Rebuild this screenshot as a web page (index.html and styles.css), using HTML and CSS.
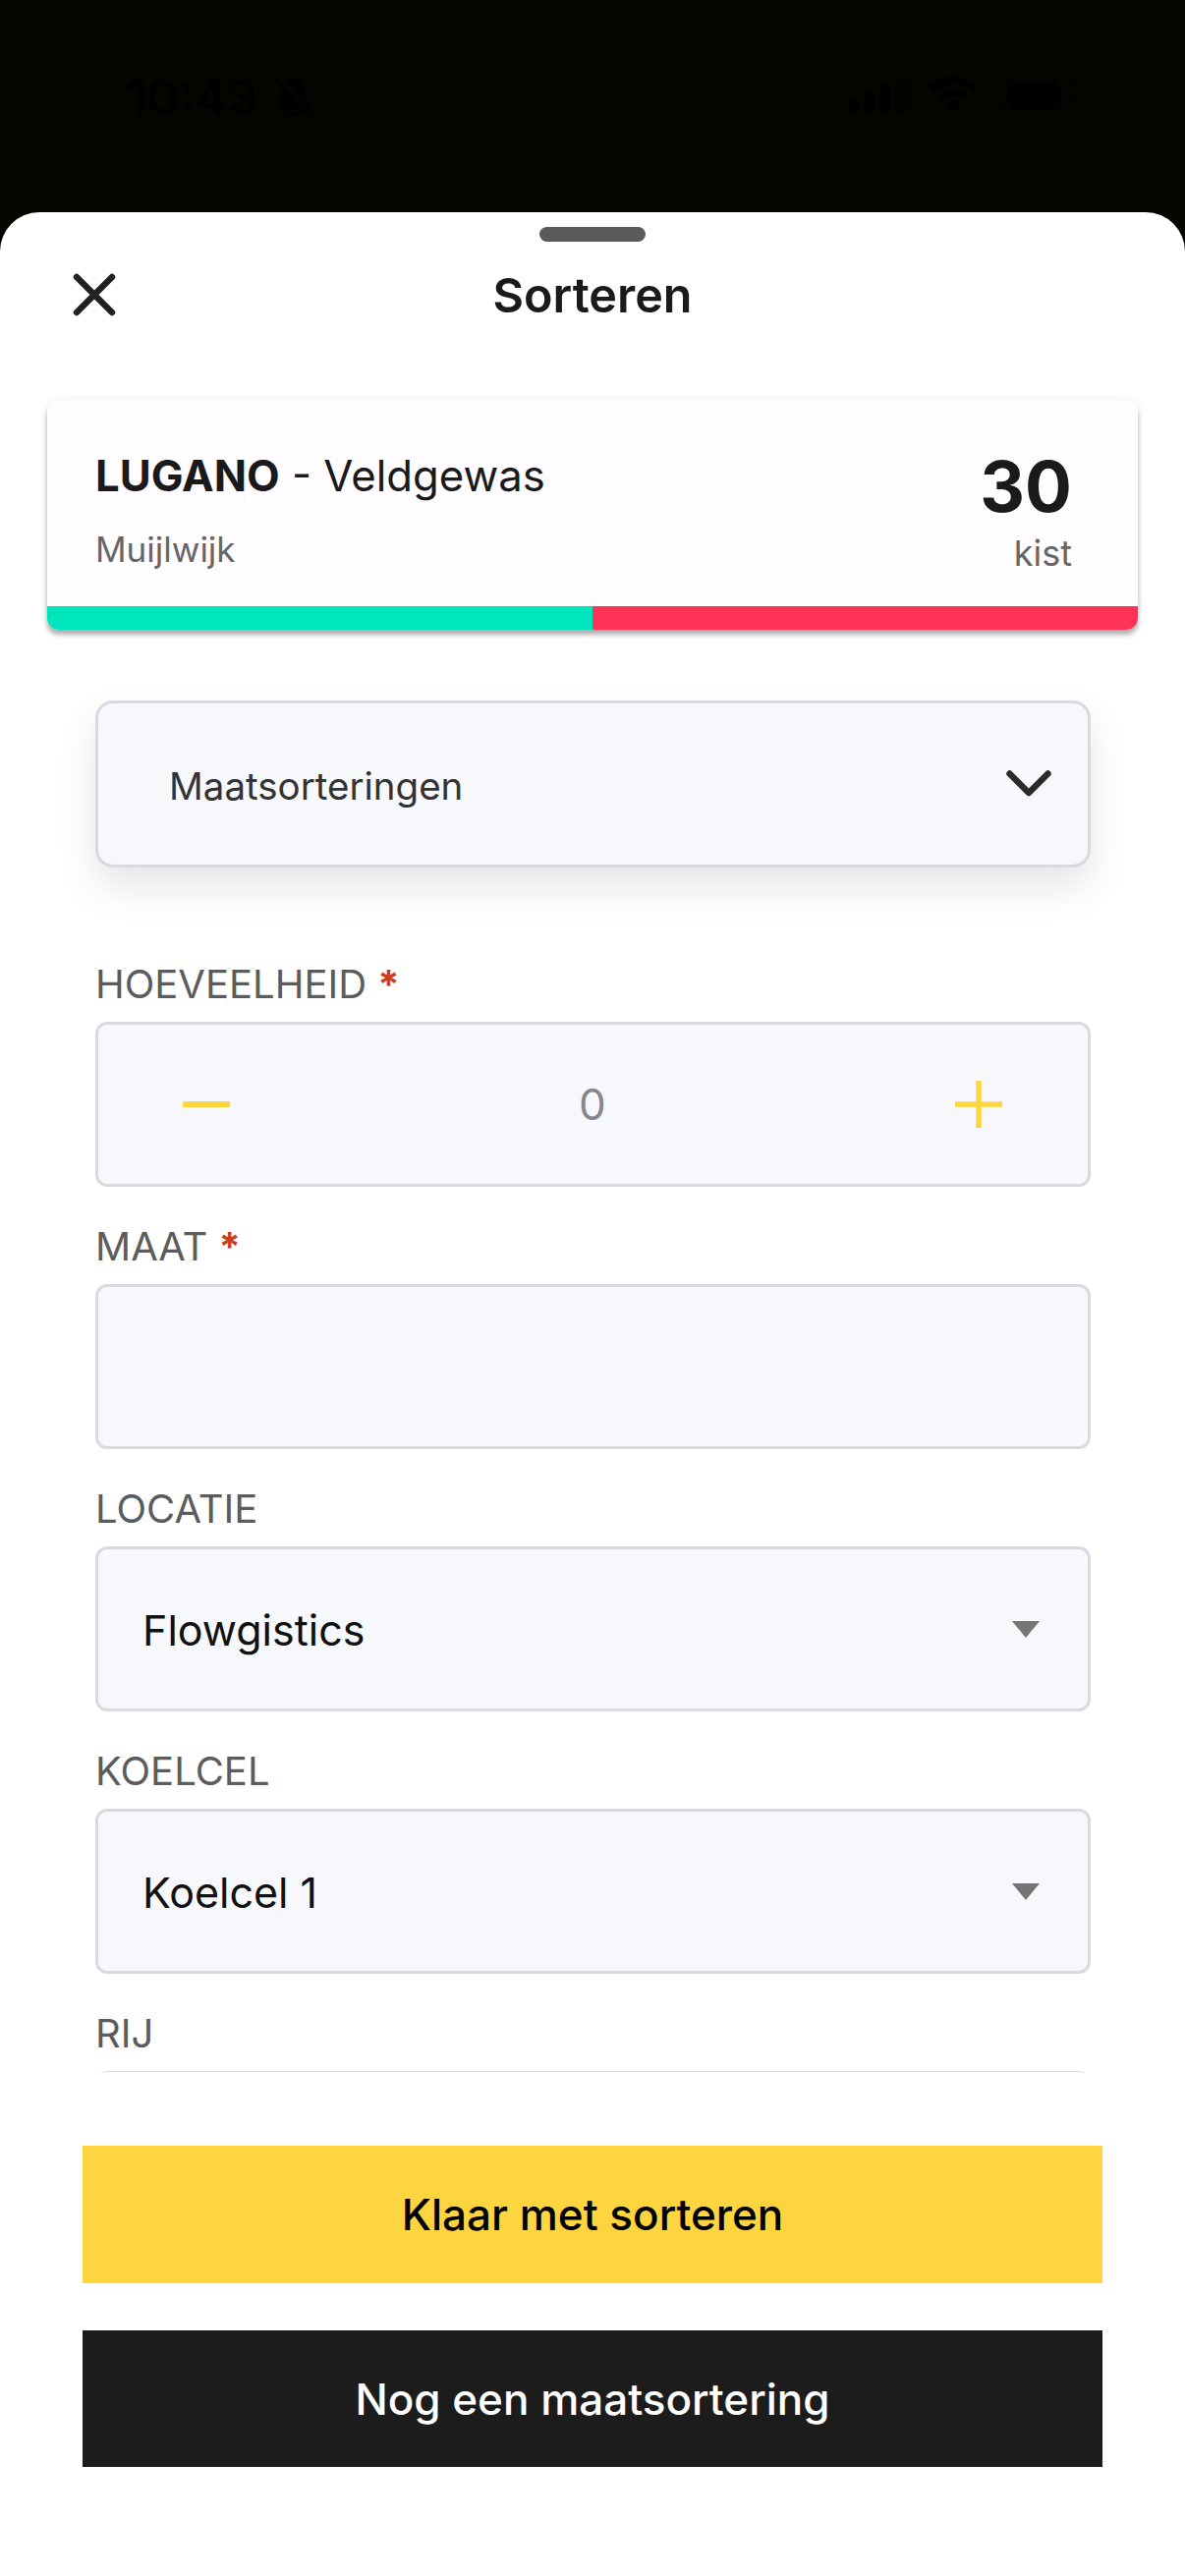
FILE: index.html
```html
<!DOCTYPE html>
<html lang="nl">
<head>
<meta charset="utf-8">
<title>Sorteren</title>
<link rel="stylesheet" href="styles.css">
</head>
<body>
<div class="status">
  <div class="status-left">
    <span class="time">10:43</span>
    <svg class="bell" width="42" height="42" viewBox="0 0 42 42"><path d="M21 1c2 0 3 1 3 3 6 1 9 6 9 12 0 7 2 11 5 14v3H4v-3c3-3 5-7 5-14 0-6 3-11 9-12 0-2 1-3 3-3zM15 35h12c0 4-3 6-6 6s-6-2-6-6z" fill="#000"/><path d="M5 1l34 38" stroke="#050500" stroke-width="6"/><path d="M3 3l34 38" stroke="#000" stroke-width="3"/></svg>
  </div>
  <div class="status-right">
    <svg width="58" height="38" viewBox="0 0 58 38"><g fill="#000"><rect x="0" y="23" width="10" height="14" rx="2"/><rect x="16" y="16" width="10" height="21" rx="2"/><rect x="32" y="8" width="10" height="29" rx="2"/><rect x="48" y="0" width="10" height="37" rx="2" opacity=".5"/></g></svg>
    <svg width="50" height="38" viewBox="0 0 50 38"><path d="M25 0c10 0 18 4 25 10l-5 6c-5-5-12-8-20-8S10 11 5 16L0 10C7 4 15 0 25 0z" fill="#000"/><path d="M25 13c6 0 11 2 15 6l-5 5c-3-2-6-4-10-4s-7 2-10 4l-5-5c4-4 9-6 15-6z" fill="#000"/><path d="M25 25c3 0 5 1 7 3l-7 9-7-9c2-2 4-3 7-3z" fill="#000"/></svg>
    <svg width="80" height="38" viewBox="0 0 80 38"><rect x="1.500" y="1.500" width="70" height="35" rx="11" fill="none" stroke="#000" stroke-width="2" opacity=".6"/><rect x="5" y="5" width="55" height="28" rx="8" fill="#000"/><path d="M75 13c3 1 4 3 4 6s-1 5-4 6z" fill="#000" opacity=".6"/></svg>
  </div>
</div>
<main class="sheet">
  <div class="handle"></div>
  <header class="header">
    <svg class="close" width="44" height="44" viewBox="0 0 44 44"><path d="M4 4l36 36M40 4L4 40" stroke="#222" stroke-width="6.500" stroke-linecap="round" fill="none"/></svg>
    <h1 class="title">Sorteren</h1>
  </header>
  <section class="card">
    <div class="card-body">
      <div class="card-info">
        <div class="card-name"><b>LUGANO</b> - Veldgewas</div>
        <div class="card-place">Muijlwijk</div>
      </div>
      <div class="card-qty">
        <div class="qty-num">30</div>
        <div class="qty-unit">kist</div>
      </div>
    </div>
    <div class="card-bar"><span class="bar-green"></span><span class="bar-red"></span></div>
  </section>
  <div class="select-main">
    <span>Maatsorteringen</span>
    <svg width="48" height="28" viewBox="0 0 48 28"><path d="M4.500 4.500L24 24 43.500 4.500" fill="none" stroke="#2b2b2e" stroke-width="6.500" stroke-linecap="round" stroke-linejoin="round"/></svg>
  </div>
  <form class="form">
    <div class="field">
      <label class="label">HOEVEELHEID <span class="req">*</span></label>
      <div class="input stepper">
        <svg width="48" height="48" viewBox="0 0 48 48"><path d="M1 24h46" stroke="#ffd53d" stroke-width="6" stroke-linecap="round"/></svg>
        <span class="step-val">0</span>
        <svg width="48" height="48" viewBox="0 0 48 48"><path d="M1 24h46M24 1v46" stroke="#ffd53d" stroke-width="5.500" stroke-linecap="round"/></svg>
      </div>
    </div>
    <div class="field">
      <label class="label">MAAT <span class="req">*</span></label>
      <div class="input"></div>
    </div>
    <div class="field">
      <label class="label">LOCATIE</label>
      <div class="input dropdown"><span>Flowgistics</span><i class="tri"></i></div>
    </div>
    <div class="field">
      <label class="label">KOELCEL</label>
      <div class="input dropdown"><span>Koelcel 1</span><i class="tri"></i></div>
    </div>
    <div class="field">
      <label class="label">RIJ</label>
      <div class="input thin"></div>
    </div>
  </form>
  <div class="actions">
    <button class="btn btn-yellow" type="button">Klaar met sorteren</button>
    <button class="btn btn-black" type="button">Nog een maatsortering</button>
  </div>
</main>
</body>
</html>
```
FILE: styles.css
```css
* { box-sizing: border-box; }
html, body { margin: 0; padding: 0; }
body {
  width: 1206px;
  height: 2622px;
  overflow: hidden;
  background: #050500;
  font-family: Inter, "Liberation Sans", sans-serif;
  display: flex;
  flex-direction: column;
}
.status {
  height: 216px;
  flex: none;
  padding: 78px 106px 0 128px;
  display: flex;
  justify-content: space-between;
  align-items: flex-start;
}
.status-left { display: flex; align-items: center; gap: 15px; }
.time { font-size: 50px; line-height: 40px; font-weight: 600; color: #000; }
.status-right { display: flex; align-items: center; gap: 24px; }
.sheet {
  flex: 1;
  background: #fff;
  border-radius: 40px 40px 0 0;
  padding: 15px 48px 0;
  display: flex;
  flex-direction: column;
}
.handle {
  width: 108px;
  height: 15px;
  border-radius: 8px;
  background: #5a5a5a;
  align-self: center;
  flex: none;
}
.header {
  height: 110px;
  flex: none;
  position: relative;
  display: flex;
  align-items: center;
  justify-content: center;
}
.close { position: absolute; left: 26px; top: 32px; }
.title { margin: -2px 0 0; font-size: 48.500px; font-weight: 600; color: #1a1a1a; }
.card {
  margin-top: 51px;
  height: 234px;
  flex: none;
  border-radius: 12px;
  background: #fffdff;
  box-shadow: 0 5px 5px rgba(0,0,0,.3), 0 0 12px rgba(0,0,0,.06);
  overflow: hidden;
  display: flex;
  flex-direction: column;
}
.card-body {
  flex: 1;
  padding: 54px 67px 0 49px;
  display: flex;
  justify-content: space-between;
}
.card-name { font-size: 43.700px; line-height: 48px; color: #1a1a1a; }
.card-name b { font-weight: 700; }
.card-place { margin-top: 26px; font-size: 35px; line-height: 48px; color: #666; }
.card-qty { text-align: right; margin-top: -6px; }
.qty-num { font-size: 71px; line-height: 80px; font-weight: 700; color: #1a1a1a; }
.qty-unit { margin-top: 4px; font-size: 36px; line-height: 48px; color: #666; }
.card-bar { height: 24px; flex: none; display: flex; }
.bar-green { flex: 1; background: #00e6bc; }
.bar-red { flex: 1; background: #ff3355; }
.select-main {
  margin: 72px 0 0 49px;
  width: 1013px;
  height: 170px;
  flex: none;
  border: 3px solid #d8dae0;
  border-radius: 18px;
  background: #f6f8fb;
  box-shadow: 0 20px 40px rgba(0,0,0,.1);
  padding: 4px 36px 0 72px;
  display: flex;
  align-items: center;
  justify-content: space-between;
  font-size: 38.500px;
  color: #333;
}
.select-main svg { margin-top: -7px; }
.form {
  margin: 93px 0 0 49px;
  width: 1013px;
  height: 1134px;
  flex: none;
  overflow: hidden;
}
.field { height: 267px; }
.label {
  display: block;
  height: 50px;
  margin-bottom: 14px;
  padding-top: 1px;
  font-size: 40px;
  line-height: 50px;
  color: #5c5c5c;
}
.req { color: #c8401e; font-weight: 700; }
.input {
  height: 168px;
  border: 3px solid #d8dae0;
  border-radius: 12px;
  background: #f6f8fb;
}
.input.thin { border: 1px solid #dcdcdc; background: #fff; }
.stepper {
  padding: 0 87px 0 86px;
  display: flex;
  align-items: center;
  justify-content: space-between;
}
.step-val { font-size: 44px; color: #85888c; }
.dropdown {
  padding: 2px 49px 0 45px;
  display: flex;
  align-items: center;
  justify-content: space-between;
  font-size: 43px;
  color: #111;
}
.tri {
  width: 0;
  height: 0;
  margin-top: -2px;
  border-left: 14px solid transparent;
  border-right: 14px solid transparent;
  border-top: 17px solid #757575;
}
.actions {
  margin: 74px 36px 0;
  display: flex;
  flex-direction: column;
  gap: 48px;
}
.btn {
  height: 139px;
  border: 0;
  padding: 0;
  font-family: inherit;
  font-size: 44px;
  font-weight: 500;
}
.btn-yellow { height: 140px; background: #ffd53f; color: #000; }
.btn-black { background: #1c1c1c; color: #fff; }
```
